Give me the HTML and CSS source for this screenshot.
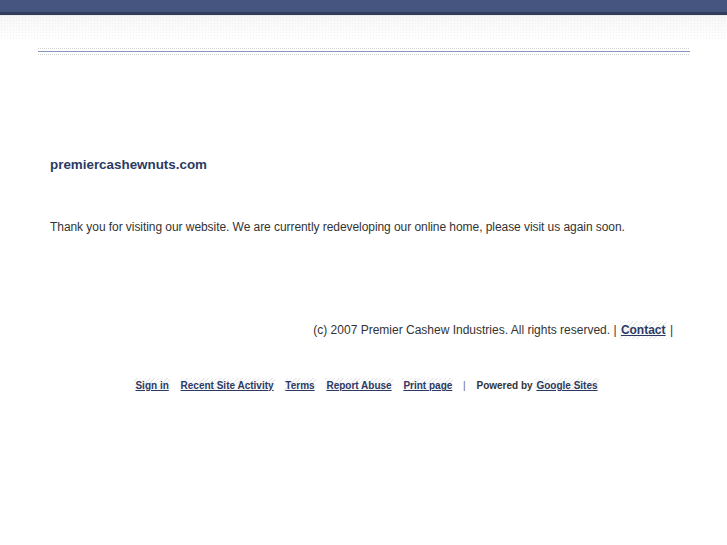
FILE: index.html
```html
<!DOCTYPE html>
<html lang="en">

<head>
    <meta charset="UTF-8">
    <title>premiercashewnuts.com</title>
    <link rel="stylesheet" href="styles.css">
</head>

<body>
    <div class="header-bar"></div>
    <div class="header-shade"></div>
    <div class="page">
        <div class="divider">
            <div class="dots"></div>
            <div class="line"></div>
            <div class="dots"></div>
        </div>
        <div class="content">
            <h1 class="site-title">premiercashewnuts.com</h1>
            <p class="message">Thank you for visiting our website. We are currently redeveloping our online home, please visit us again soon.</p>
            <p class="copyright">(c) 2007 Premier Cashew Industries. All rights reserved. | <a href="#" class="hatch contact">Contact</a> |</p>
        </div>
        <div class="site-footer">
            <a href="#" class="hatch">Sign in</a>
            <a href="#" class="hatch">Recent Site Activity</a>
            <a href="#" class="hatch">Terms</a>
            <a href="#" class="hatch">Report Abuse</a>
            <a href="#" class="hatch">Print page</a>
            <span class="sep">|</span>
            <span class="powered">Powered by</span>
            <a href="#" class="hatch">Google Sites</a>
        </div>
    </div>
</body>

</html>
```

FILE: styles.css
```css
body {
    font-family: "Liberation Sans", Arial, sans-serif;
    background-color: #fff;
    margin: 0;
    padding: 0;
    color: #333;
}

.header-bar {
    height: 12px;
    background-color: #46557f;
    border-bottom: 3px solid #323d5c;
}

.header-shade {
    height: 24px;
    background-color: #fff;
    background-image:
        radial-gradient(circle, rgba(210, 210, 210, 0.25) 0.8px, transparent 1px),
        linear-gradient(#f7f7f7, #fff);
    background-size: 3px 3px, 100% 100%;
    border-top: 1px solid #ececec;
}

.page {
    margin: 0 37px 0 38px;
}

.divider {
    margin-top: 8px;
}

.divider .dots {
    height: 1px;
    background-image: repeating-linear-gradient(90deg, #d2d2d2 0, #d2d2d2 1px, transparent 1px, transparent 2px);
}

.divider .line {
    height: 1px;
    margin: 2px 0;
    background-color: #8797bf;
}

.content {
    padding: 0 17px 0 12px;
}

.site-title {
    font-size: 13.4px;
    font-weight: bold;
    color: #2c3a63;
    margin: 102px 0 0;
}

.message {
    font-size: 12px;
    letter-spacing: -0.06px;
    margin: 48px 0 0;
}

.copyright {
    font-size: 12px;
    text-align: right;
    margin: 89px 0 0;
}

.hatch {
    color: #2c3a63;
    font-weight: bold;
    background-image: repeating-linear-gradient(-45deg, #ececec 0, #ececec 1px, #fff 1px, #fff 3px);
    padding: 2px 1px;
}

.contact {
    font-size: 12px;
}

.site-footer {
    text-align: center;
    font-size: 10px;
    margin-top: 43px;
    padding-left: 12px;
}

.site-footer .hatch {
    margin-right: 7px;
}

.site-footer .sep {
    color: #666;
    margin-right: 8px;
}

.site-footer .powered {
    font-weight: bold;
    color: #333;
}
```
